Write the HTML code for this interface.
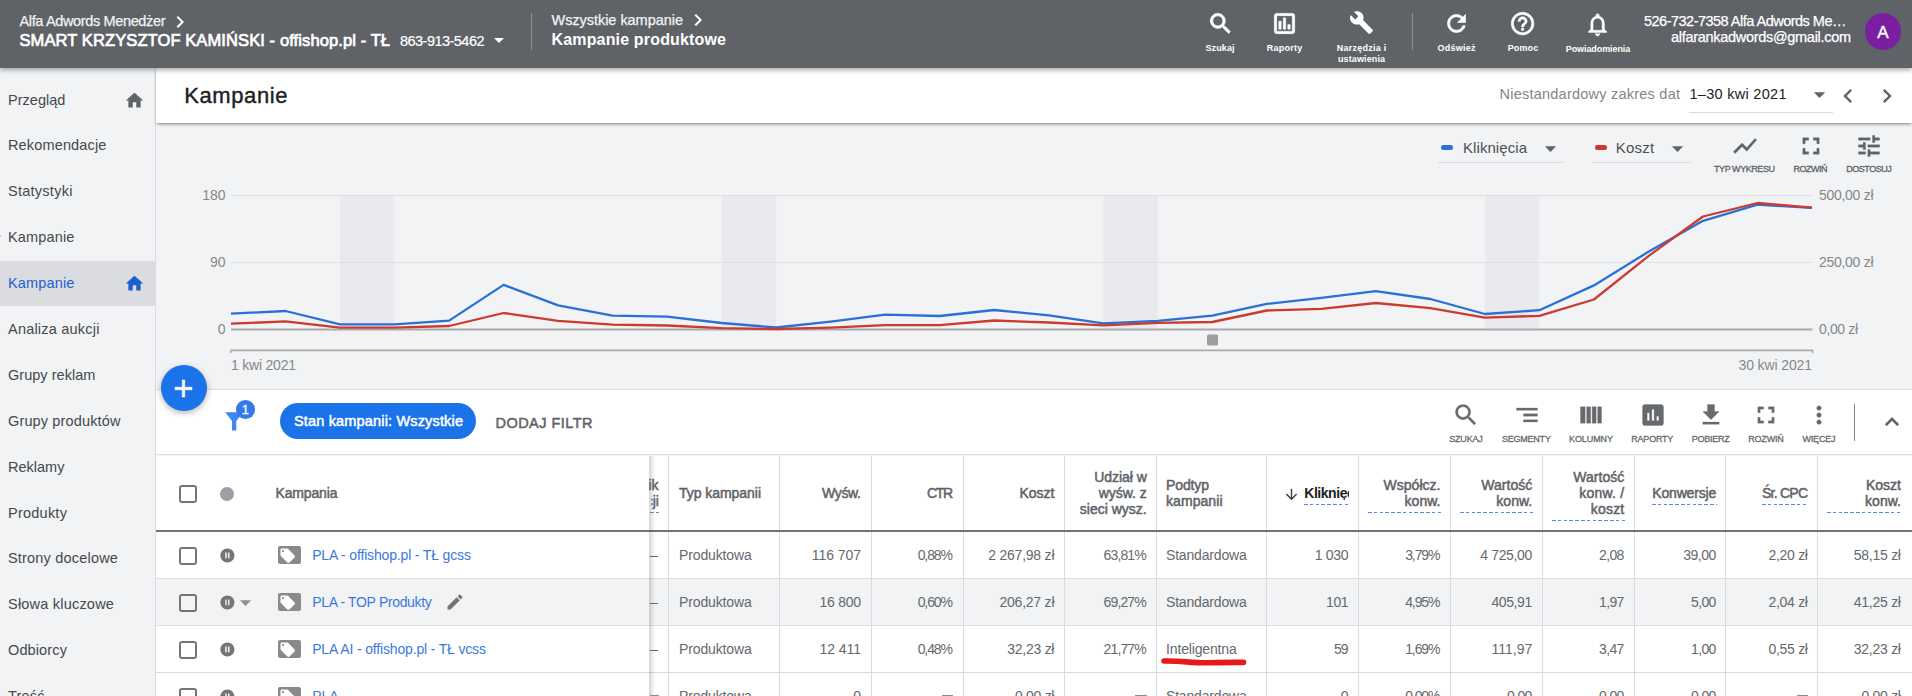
<!DOCTYPE html>
<html lang="pl"><head><meta charset="utf-8"><title>Kampanie</title><style>
html,body{margin:0;padding:0}
body{width:1912px;height:696px;overflow:hidden;position:relative;background:#f1f3f4;font-family:"Liberation Sans",sans-serif;}
.a{position:absolute;display:block}
.t{position:absolute;white-space:pre;line-height:1;display:block}
</style></head>
<body>
<div class="bg">
<div class="a" style="left:0px;top:68px;width:155px;height:628px;background:#f1f3f4;border-right:1px solid #dadce0"></div>
<div class="a" style="left:0px;top:261px;width:155px;height:45px;background:#dadce0"></div>
<div class="a" style="left:156px;top:68px;width:1756px;height:55px;background:#fff;box-shadow:0 2px 3px -1px rgba(0,0,0,.5)"></div>
<div class="a" style="left:0px;top:0px;width:1912px;height:68px;background:#5f6368;box-shadow:0 2px 5px rgba(0,0,0,.35)"></div>
</div>
<header>
<span class="t" style="left:19.50px;top:14.13px;font-size:14.5px;color:#f1f3f4;letter-spacing:-0.357px;-webkit-text-stroke:0.25px #f1f3f4;">Alfa Adwords Menedżer</span>
<svg class="a" style="left:168.00px;top:10.00px" width="24" height="24" viewBox="0 0 24 24"><path fill="#fff"  d="M10 6L8.59 7.41 13.17 12l-4.58 4.59L10 18l6-6z"/></svg>
<span class="t" style="left:19.50px;top:32.28px;font-size:16.5px;color:#fff;letter-spacing:0.103px;-webkit-text-stroke:0.7px #fff;">SMART KRZYSZTOF KAMIŃSKI - offishop.pl - TŁ</span>
<span class="t" style="left:400.00px;top:33.98px;font-size:14.5px;color:#fff;letter-spacing:-0.528px;-webkit-text-stroke:0.2px #fff;">863-913-5462</span>
<svg class="a" style="left:487.00px;top:28.30px" width="24" height="24" viewBox="0 0 24 24"><path fill="#fff"  d="M7 10l5 5 5-5z"/></svg>
<div class="a" style="left:530.5px;top:13px;width:1px;height:37px;background:rgba(255,255,255,.3)"></div>
<span class="t" style="left:551.50px;top:12.73px;font-size:14.5px;color:#f1f3f4;letter-spacing:-0.039px;-webkit-text-stroke:0.25px #f1f3f4;">Wszystkie kampanie</span>
<svg class="a" style="left:685.50px;top:8.00px" width="24" height="24" viewBox="0 0 24 24"><path fill="#fff"  d="M10 6L8.59 7.41 13.17 12l-4.58 4.59L10 18l6-6z"/></svg>
<span class="t" style="left:551.50px;top:31.96px;font-size:16px;color:#fff;font-weight:700;letter-spacing:0.162px;">Kampanie produktowe</span>
<svg class="a" style="left:1207.10px;top:9.60px" width="27.4" height="27.4" viewBox="0 0 24 24"><path fill="#fff"  stroke="#fff" stroke-width="0.7" stroke-linejoin="round" d="M15.5 14h-.79l-.28-.27C15.41 12.59 16 11.11 16 9.5 16 5.91 13.09 3 9.5 3S3 5.91 3 9.5 5.91 16 9.5 16c1.61 0 3.09-.59 4.23-1.57l.27.28v.79l5 4.99L20.49 19l-4.99-5zm-6 0C7.01 14 5 11.99 5 9.5S7.01 5 9.5 5 14 7.01 14 9.5 11.99 14 9.5 14z"/></svg>
<svg class="a" style="left:1271.10px;top:9.90px" width="27" height="27" viewBox="0 0 24 24"><path fill="#fff"  stroke="#fff" stroke-width="0.6" stroke-linejoin="round" d="M19 3H5c-1.1 0-2 .9-2 2v14c0 1.1.9 2 2 2h14c1.1 0 2-.9 2-2V5c0-1.1-.9-2-2-2zm0 16H5V5h14v14zM7 10h2v7H7zm4-3h2v10h-2zm4 6h2v4h-2z"/></svg>
<svg class="a" style="left:1349.20px;top:10.30px" width="25" height="25" viewBox="0 0 24 24"><path fill="#fff"  d="M22.7 19l-9.1-9.1c.9-2.3.4-5-1.5-6.9-2-2-5-2.4-7.4-1.3L9 6 6 9 1.6 4.7C.4 7.1.9 10.1 2.9 12.1c1.9 1.9 4.6 2.4 6.9 1.5l9.1 9.1c.4.4 1 .4 1.4 0l2.3-2.3c.5-.4.5-1.1.1-1.4z"/></svg>
<svg class="a" style="left:1443.00px;top:10.20px" width="27" height="27" viewBox="0 0 24 24"><path fill="#fff"  stroke="#fff" stroke-width="0.6" stroke-linejoin="round" d="M17.65 6.35C16.2 4.9 14.21 4 12 4c-4.42 0-7.99 3.58-7.99 8s3.57 8 7.99 8c3.73 0 6.84-2.55 7.73-6h-2.08c-.82 2.33-3.04 4-5.65 4-3.31 0-6-2.69-6-6s2.69-6 6-6c1.66 0 3.14.69 4.22 1.78L13 11h7V4l-2.35 2.35z"/></svg>
<svg class="a" style="left:1509.40px;top:9.90px" width="27.2" height="27.2" viewBox="0 0 24 24"><path fill="#fff"  stroke="#fff" stroke-width="0.5" stroke-linejoin="round" d="M11 18h2v-2h-2v2zm1-16C6.48 2 2 6.48 2 12s4.48 10 10 10 10-4.48 10-10S17.52 2 12 2zm0 18c-4.41 0-8-3.59-8-8s3.59-8 8-8 8 3.59 8 8-3.59 8-8 8zm0-14c-2.21 0-4 1.79-4 4h2c0-1.1.9-2 2-2s2 .9 2 2c0 2-3 1.75-3 5h2c0-2.25 3-2.5 3-5 0-2.21-1.79-4-4-4z"/></svg>
<svg class="a" style="left:1584.40px;top:11.00px" width="27.2" height="27.2" viewBox="0 0 24 24"><path fill="#fff"  stroke="#fff" stroke-width="0.4" stroke-linejoin="round" d="M12 22c1.1 0 2-.9 2-2h-4c0 1.1.9 2 2 2zm6-6v-5c0-3.07-1.63-5.64-4.5-6.32V4c0-.83-.67-1.5-1.5-1.5s-1.5.67-1.5 1.5v.68C7.64 5.36 6 7.92 6 11v5l-2 2v1h16v-1l-2-2zm-2 1H8v-6c0-2.48 1.51-4.5 4-4.5s4 2.02 4 4.5v6z"/></svg>
<span class="t" style="left:1205.50px;top:43.58px;font-size:9px;color:#fff;font-weight:700;letter-spacing:0.097px;">Szukaj</span>
<span class="t" style="left:1266.75px;top:43.58px;font-size:9px;color:#fff;font-weight:700;letter-spacing:0.247px;">Raporty</span>
<span class="t" style="left:1336.75px;top:43.58px;font-size:9px;color:#fff;font-weight:700;letter-spacing:0.247px;">Narzędzia i</span>
<span class="t" style="left:1338.00px;top:55.18px;font-size:9px;color:#fff;font-weight:700;letter-spacing:0.109px;">ustawienia</span>
<span class="t" style="left:1437.50px;top:43.58px;font-size:9px;color:#fff;font-weight:700;letter-spacing:0.247px;">Odśwież</span>
<span class="t" style="left:1507.75px;top:43.58px;font-size:9px;color:#fff;font-weight:700;letter-spacing:0.121px;">Pomoc</span>
<span class="t" style="left:1565.75px;top:44.58px;font-size:9px;color:#fff;font-weight:700;letter-spacing:-0.085px;">Powiadomienia</span>
<div class="a" style="left:1412px;top:13px;width:1px;height:37px;background:rgba(255,255,255,.3)"></div>
<span class="t" style="left:1644.00px;top:13.73px;font-size:14.5px;color:#fff;letter-spacing:-0.512px;-webkit-text-stroke:0.25px #fff;">526-732-7358 Alfa Adwords Me…</span>
<span class="t" style="left:1671.00px;top:29.73px;font-size:14.5px;color:#fff;letter-spacing:-0.299px;-webkit-text-stroke:0.25px #fff;">alfarankadwords@gmail.com</span>
<div class="a" style="left:1864.5px;top:12.8px;width:36.6px;height:36.8px;background:#7b1fa2;border-radius:50%"></div>
<span class="t" style="left:1877.13px;top:23.61px;font-size:17px;color:#fff;-webkit-text-stroke:0.4px #fff;">A</span>
</header>
<nav>
<span class="t" style="left:8.00px;top:92.53px;font-size:14.5px;color:#45494d;letter-spacing:0.024px;">Przegląd</span>
<span class="t" style="left:8.00px;top:138.42px;font-size:14.5px;color:#45494d;letter-spacing:0.151px;">Rekomendacje</span>
<span class="t" style="left:8.00px;top:184.31px;font-size:14.5px;color:#45494d;letter-spacing:0.261px;">Statystyki</span>
<span class="t" style="left:8.00px;top:230.20px;font-size:14.5px;color:#45494d;letter-spacing:0.158px;">Kampanie</span>
<span class="t" style="left:8.00px;top:276.09px;font-size:14.5px;color:#1c62cf;letter-spacing:0.158px;">Kampanie</span>
<span class="t" style="left:8.00px;top:321.98px;font-size:14.5px;color:#45494d;letter-spacing:0.210px;">Analiza aukcji</span>
<span class="t" style="left:8.00px;top:367.87px;font-size:14.5px;color:#45494d;letter-spacing:0.034px;">Grupy reklam</span>
<span class="t" style="left:8.00px;top:413.76px;font-size:14.5px;color:#45494d;letter-spacing:0.141px;">Grupy produktów</span>
<span class="t" style="left:8.00px;top:459.65px;font-size:14.5px;color:#45494d;">Reklamy</span>
<span class="t" style="left:8.00px;top:505.54px;font-size:14.5px;color:#45494d;letter-spacing:0.238px;">Produkty</span>
<span class="t" style="left:8.00px;top:551.43px;font-size:14.5px;color:#45494d;letter-spacing:0.193px;">Strony docelowe</span>
<span class="t" style="left:8.00px;top:597.32px;font-size:14.5px;color:#45494d;letter-spacing:0.210px;">Słowa kluczowe</span>
<span class="t" style="left:8.00px;top:643.21px;font-size:14.5px;color:#45494d;letter-spacing:0.124px;">Odbiorcy</span>
<span class="t" style="left:8.00px;top:689.10px;font-size:14.5px;color:#45494d;letter-spacing:0.170px;">Treść</span>
<div class="a" style="left:0px;top:235px;width:1px;height:2px;background:#c4c6c9"></div>
<svg class="a" style="left:123.50px;top:89.90px" width="21" height="21" viewBox="0 0 24 24"><path fill="#5f6368"  d="M10 20v-6h4v6h5v-8h3L12 3 2 12h3v8z"/></svg>
<svg class="a" style="left:123.60px;top:273.40px" width="21" height="21" viewBox="0 0 24 24"><path fill="#1a5fcc"  d="M10 20v-6h4v6h5v-8h3L12 3 2 12h3v8z"/></svg>
</nav>
<main>
<section class="titlebar">
<span class="t" style="left:184.20px;top:85.18px;font-size:22px;color:#202124;letter-spacing:0.603px;-webkit-text-stroke:0.4px #202124;">Kampanie</span>
<span class="t" style="left:1499.50px;top:87.23px;font-size:14.5px;color:#80868b;letter-spacing:0.233px;">Niestandardowy zakres dat</span>
<span class="t" style="left:1689.50px;top:87.23px;font-size:14.5px;color:#202124;letter-spacing:0.290px;">1–30 kwi 2021</span>
<div class="a" style="left:1689px;top:112px;width:144px;height:1px;background:#dadce0"></div>
<svg class="a" style="left:1806.20px;top:80.70px" width="27" height="27" viewBox="0 0 24 24"><path fill="#5f6368"  d="M7 10l5 5 5-5z"/></svg>
<svg class="a" style="left:1833.60px;top:81.80px" width="28" height="28" viewBox="0 0 24 24"><path fill="#5f6368"  d="M15.41 7.41L14 6l-6 6 6 6 1.41-1.41L10.83 12z"/></svg>
<svg class="a" style="left:1873.40px;top:81.80px" width="28" height="28" viewBox="0 0 24 24"><path fill="#5f6368"  d="M10 6L8.59 7.41 13.17 12l-4.58 4.59L10 18l6-6z"/></svg>
</section>
<section class="chart">
<span class="t" style="left:1463.00px;top:139.80px;font-size:15px;color:#4d5156;letter-spacing:0.069px;">Kliknięcia</span>
<span class="t" style="left:1615.75px;top:139.80px;font-size:15px;color:#4d5156;letter-spacing:0.246px;">Koszt</span>
<div class="a" style="left:1441.3px;top:145.3px;width:12px;height:4.3px;background:#2a70d6;border-radius:2.2px"></div>
<div class="a" style="left:1594.8px;top:145.3px;width:12px;height:4.3px;background:#cc3a30;border-radius:2.2px"></div>
<svg class="a" style="left:1536.50px;top:134.70px" width="27" height="27" viewBox="0 0 24 24"><path fill="#5f6368"  d="M7 10l5 5 5-5z"/></svg>
<svg class="a" style="left:1663.50px;top:134.70px" width="27" height="27" viewBox="0 0 24 24"><path fill="#5f6368"  d="M7 10l5 5 5-5z"/></svg>
<div class="a" style="left:1438px;top:162px;width:126px;height:1px;background:#dadce0"></div>
<div class="a" style="left:1592px;top:162px;width:99px;height:1px;background:#dadce0"></div>
<svg class="a" style="left:1730.50px;top:131.50px" width="28" height="28" viewBox="0 0 24 24"><path fill="#5f6368"  stroke="#5f6368" stroke-width="0.3" stroke-linejoin="round" d="M3.5 18.49l6-6.01 4 4L22 6.92l-1.41-1.41-7.09 7.97-4-4L2 16.99z"/></svg>
<svg class="a" style="left:1796.50px;top:131.70px" width="28" height="28" viewBox="0 0 24 24"><path fill="#5f6368"  stroke="#5f6368" stroke-width="0.3" stroke-linejoin="round" d="M7 14H5v5h5v-2H7v-3zm-2-4h2V7h3V5H5v5zm12 7h-3v2h5v-5h-2v3zM14 5v2h3v3h2V5h-5z"/></svg>
<svg class="a" style="left:1855.00px;top:132.20px" width="28" height="28" viewBox="0 0 24 24"><path fill="#5f6368"  stroke="#5f6368" stroke-width="0.3" stroke-linejoin="round" d="M3 17v2h6v-2H3zM3 5v2h10V5H3zm10 16v-2h8v-2h-8v-2h-2v6h2zM7 9v2H3v2h4v2h2V9H7zm14 4v-2H11v2h10zm-6-4h2V7h4V5h-4V3h-2v6z"/></svg>
<span class="t" style="left:1714.00px;top:165.08px;font-size:9px;color:#5f6368;letter-spacing:-0.436px;-webkit-text-stroke:0.3px #5f6368;">TYP WYKRESU</span>
<span class="t" style="left:1793.50px;top:165.08px;font-size:9px;color:#5f6368;letter-spacing:-0.500px;-webkit-text-stroke:0.3px #5f6368;">ROZWIŃ</span>
<span class="t" style="left:1846.25px;top:165.08px;font-size:9px;color:#5f6368;letter-spacing:-0.478px;-webkit-text-stroke:0.3px #5f6368;">DOSTOSUJ</span>
<svg class="a" style="left:0;top:0" width="1912" height="400" viewBox="0 0 1912 400"><rect x="340.0" y="195" width="54.5" height="134.5" fill="#e8eaed"/><rect x="721.7" y="195" width="54.5" height="134.5" fill="#e8eaed"/><rect x="1103.3" y="195" width="54.5" height="134.5" fill="#e8eaed"/><rect x="1484.9" y="195" width="54.5" height="134.5" fill="#e8eaed"/><path d="M231.0 195.5H1812.0M231.0 262.5H1812.0" stroke="#e0e0e0" stroke-width="1" fill="none"/><path d="M231.0 329.5H1812.6" stroke="#aaa" stroke-width="2.2" fill="none"/><path d="M231.0 353V350.4H1812.6V353" stroke="#aaa" stroke-width="1.6" fill="none" stroke-linejoin="round"/><rect x="1207" y="334.5" width="11" height="11" rx="1.5" fill="#9e9e9e"/><polyline points="231.0,313.7 285.5,311.0 340.0,324.3 394.6,324.3 449.1,320.6 503.6,284.9 558.1,305.3 612.6,315.7 667.1,316.6 721.7,323.0 776.2,327.5 830.7,321.7 885.2,314.7 939.7,316.0 994.2,310.0 1048.8,315.4 1103.3,323.3 1157.8,320.8 1212.3,315.7 1266.8,303.9 1321.3,297.8 1375.9,291.2 1430.4,299.0 1484.9,314.0 1539.4,310.2 1593.9,285.4 1648.4,251.8 1703.0,220.8 1757.5,204.7 1812.0,207.9" fill="none" stroke="#2a70d6" stroke-width="2.3" stroke-linejoin="round"/><polyline points="231.0,323.7 285.5,321.4 340.0,327.7 394.6,327.7 449.1,326.0 503.6,313.0 558.1,320.8 612.6,324.6 667.1,325.5 721.7,328.2 776.2,329.0 830.7,327.7 885.2,325.2 939.7,325.2 994.2,320.5 1048.8,322.5 1103.3,325.3 1157.8,322.9 1212.3,322.0 1266.8,310.5 1321.3,308.8 1375.9,303.0 1430.4,308.2 1484.9,317.7 1539.4,315.8 1593.9,299.5 1648.4,256.1 1703.0,216.5 1757.5,203.0 1812.0,207.6" fill="none" stroke="#cc3a30" stroke-width="2.3" stroke-linejoin="round"/></svg>
<span class="t" style="left:202.14px;top:188.15px;font-size:14px;color:#85888c;">180</span>
<span class="t" style="left:209.92px;top:255.15px;font-size:14px;color:#85888c;">90</span>
<span class="t" style="left:217.70px;top:322.15px;font-size:14px;color:#85888c;">0</span>
<span class="t" style="left:1819.00px;top:188.15px;font-size:14px;color:#85888c;letter-spacing:-0.291px;">500,00 zł</span>
<span class="t" style="left:1819.00px;top:255.15px;font-size:14px;color:#85888c;letter-spacing:-0.291px;">250,00 zł</span>
<span class="t" style="left:1819.00px;top:322.15px;font-size:14px;color:#85888c;letter-spacing:-0.375px;">0,00 zł</span>
<span class="t" style="left:231.00px;top:357.65px;font-size:14px;color:#85888c;letter-spacing:-0.215px;">1 kwi 2021</span>
<span class="t" style="left:1738.50px;top:357.65px;font-size:14px;color:#85888c;letter-spacing:-0.122px;">30 kwi 2021</span>
</section>
<section class="toolbar">
<div class="a" style="left:156px;top:389px;width:1756px;height:1px;background:#dadce0"></div>
<div class="a" style="left:156px;top:390px;width:1756px;height:65px;background:#fff"></div>
<div class="a" style="left:156px;top:454.4px;width:1756px;height:1px;background:#dadce0"></div>
<div class="a" style="left:160.7px;top:365px;width:46px;height:46px;background:#1a73e8;border-radius:50%;box-shadow:0 2px 6px rgba(0,0,0,.3)"></div>
<svg class="a" style="left:169.30px;top:373.50px" width="29" height="29" viewBox="0 0 24 24"><path fill="#fff"  stroke="#fff" stroke-width="0.6" stroke-linejoin="round" d="M19 13h-6v6h-2v-6H5v-2h6V5h2v6h6v2z"/></svg>
<svg class="a" style="left:220px;top:405px" width="30" height="30" viewBox="220 405 30 30"><path fill="#4285f4" d="M225.2 412.2H243.2L236.3 420.9V430.4H232V420.9Z"/></svg>
<div class="a" style="left:236.2px;top:400.4px;width:18.6px;height:18.6px;background:#357ae8;border-radius:50%;border:0"></div>
<span class="t" style="left:241.68px;top:402.80px;font-size:13px;color:#fff;-webkit-text-stroke:0.3px #fff;">1</span>
<div class="a" style="left:280px;top:403px;width:196px;height:36.4px;background:#1a73e8;border-radius:18.2px"></div>
<span class="t" style="left:294.00px;top:413.73px;font-size:14.5px;color:#fff;letter-spacing:0.165px;-webkit-text-stroke:0.5px #fff;">Stan kampanii: Wszystkie</span>
<span class="t" style="left:495.50px;top:415.73px;font-size:14.5px;color:#5f6368;letter-spacing:0.463px;-webkit-text-stroke:0.5px #5f6368;">DODAJ FILTR</span>
<svg class="a" style="left:1452.20px;top:400.50px" width="28" height="28" viewBox="0 0 24 24"><path fill="#666a6e"  stroke="#666a6e" stroke-width="0.25" stroke-linejoin="round" d="M15.5 14h-.79l-.28-.27C15.41 12.59 16 11.11 16 9.5 16 5.91 13.09 3 9.5 3S3 5.91 3 9.5 5.91 16 9.5 16c1.61 0 3.09-.59 4.23-1.57l.27.28v.79l5 4.99L20.49 19l-4.99-5zm-6 0C7.01 14 5 11.99 5 9.5S7.01 5 9.5 5 14 7.01 14 9.5 11.99 14 9.5 14z"/></svg>
<span class="t" style="left:1449.25px;top:434.98px;font-size:9px;color:#666a6e;letter-spacing:-0.203px;-webkit-text-stroke:0.3px #666a6e;">SZUKAJ</span>
<svg class="a" style="left:1512.60px;top:400.50px" width="28" height="28" viewBox="0 0 24 24"><path fill="#666a6e"  stroke="#666a6e" stroke-width="0.25" stroke-linejoin="round" d="M9 18h12v-2H9v2zM3 6v2h18V6H3zm6 7h12v-2H9v2z"/></svg>
<span class="t" style="left:1501.90px;top:434.98px;font-size:9px;color:#666a6e;letter-spacing:-0.217px;-webkit-text-stroke:0.3px #666a6e;">SEGMENTY</span>
<svg class="a" style="left:1577.20px;top:400.50px" width="28" height="28" viewBox="0 0 24 24"><path fill="#666a6e"  stroke="#666a6e" stroke-width="0.25" stroke-linejoin="round" d="M3 5h4v14H3zM8.3 5h3.4v14H8.3zM13 5h3.4v14H13zM17.7 5H21v14h-3.3z"/></svg>
<span class="t" style="left:1569.00px;top:434.98px;font-size:9px;color:#666a6e;letter-spacing:-0.086px;-webkit-text-stroke:0.3px #666a6e;">KOLUMNY</span>
<svg class="a" style="left:1638.50px;top:400.50px" width="28" height="28" viewBox="0 0 24 24"><path fill="#666a6e"  stroke="#666a6e" stroke-width="0.25" stroke-linejoin="round" d="M19 3H5c-1.1 0-2 .9-2 2v14c0 1.1.9 2 2 2h14c1.1 0 2-.9 2-2V5c0-1.1-.9-2-2-2zM9 17H7v-7h2v7zm4 0h-2V7h2v10zm4 0h-2v-4h2v4z"/></svg>
<span class="t" style="left:1631.30px;top:434.98px;font-size:9px;color:#666a6e;letter-spacing:-0.224px;-webkit-text-stroke:0.3px #666a6e;">RAPORTY</span>
<svg class="a" style="left:1696.90px;top:400.50px" width="28" height="28" viewBox="0 0 24 24"><path fill="#666a6e"  stroke="#666a6e" stroke-width="0.25" stroke-linejoin="round" d="M19 9h-4V3H9v6H5l7 7 7-7zM5 18v2h14v-2H5z"/></svg>
<span class="t" style="left:1691.70px;top:434.98px;font-size:9px;color:#666a6e;letter-spacing:-0.253px;-webkit-text-stroke:0.3px #666a6e;">POBIERZ</span>
<svg class="a" style="left:1752.20px;top:400.50px" width="28" height="28" viewBox="0 0 24 24"><path fill="#666a6e"  stroke="#666a6e" stroke-width="0.25" stroke-linejoin="round" d="M7 14H5v5h5v-2H7v-3zm-2-4h2V7h3V5H5v5zm12 7h-3v2h5v-5h-2v3zM14 5v2h3v3h2V5h-5z"/></svg>
<span class="t" style="left:1748.25px;top:434.98px;font-size:9px;color:#666a6e;letter-spacing:-0.200px;-webkit-text-stroke:0.3px #666a6e;">ROZWIŃ</span>
<svg class="a" style="left:1805.20px;top:400.50px" width="28" height="28" viewBox="0 0 24 24"><path fill="#666a6e"  stroke="#666a6e" stroke-width="0.25" stroke-linejoin="round" d="M12 8c1.1 0 2-.9 2-2s-.9-2-2-2-2 .9-2 2 .9 2 2 2zm0 2c-1.1 0-2 .9-2 2s.9 2 2 2 2-.9 2-2-.9-2-2-2zm0 6c-1.1 0-2 .9-2 2s.9 2 2 2 2-.9 2-2-.9-2-2-2z"/></svg>
<span class="t" style="left:1802.50px;top:434.98px;font-size:9px;color:#666a6e;letter-spacing:-0.203px;-webkit-text-stroke:0.3px #666a6e;">WIĘCEJ</span>
<div class="a" style="left:1854px;top:404px;width:1px;height:36.5px;background:#80868b"></div>
<svg class="a" style="left:1878.00px;top:408.30px" width="28" height="28" viewBox="0 0 24 24"><path fill="#5f6368"  stroke="#5f6368" stroke-width="0.25" stroke-linejoin="round" d="M12 8l-6 6 1.41 1.41L12 10.83l4.59 4.58L18 14z"/></svg>
</section>
<section class="table">
<div class="a" style="left:156px;top:456px;width:1756px;height:75px;background:#fff"></div>
<div class="a" style="left:156px;top:532px;width:1756px;height:164px;background:#fff"></div>
<div class="a" style="left:156px;top:578.6px;width:1756px;height:46.6px;background:#f1f3f4"></div>
<div class="a" style="left:156px;top:577.8px;width:1756px;height:1px;background:#dadce0"></div>
<div class="a" style="left:156px;top:625.0px;width:1756px;height:1px;background:#dadce0"></div>
<div class="a" style="left:156px;top:672.4px;width:1756px;height:1px;background:#dadce0"></div>
<div class="a" style="left:668.2px;top:456px;width:1px;height:240px;background:#dadce0"></div>
<div class="a" style="left:778.6px;top:456px;width:1px;height:240px;background:#dadce0"></div>
<div class="a" style="left:870.8px;top:456px;width:1px;height:240px;background:#dadce0"></div>
<div class="a" style="left:962.8px;top:456px;width:1px;height:240px;background:#dadce0"></div>
<div class="a" style="left:1063.8px;top:456px;width:1px;height:240px;background:#dadce0"></div>
<div class="a" style="left:1156px;top:456px;width:1px;height:240px;background:#dadce0"></div>
<div class="a" style="left:1266.3px;top:456px;width:1px;height:240px;background:#dadce0"></div>
<div class="a" style="left:1357.9px;top:456px;width:1px;height:240px;background:#dadce0"></div>
<div class="a" style="left:1450px;top:456px;width:1px;height:240px;background:#dadce0"></div>
<div class="a" style="left:1541.8px;top:456px;width:1px;height:240px;background:#dadce0"></div>
<div class="a" style="left:1633.6px;top:456px;width:1px;height:240px;background:#dadce0"></div>
<div class="a" style="left:1725.4px;top:456px;width:1px;height:240px;background:#dadce0"></div>
<div class="a" style="left:1817.4px;top:456px;width:1px;height:240px;background:#dadce0"></div>
<div class="a" style="left:156px;top:530.1px;width:1756px;height:2px;background:#70757a"></div>
<div class="a" style="left:648.8px;top:456px;width:7px;height:240px;background:linear-gradient(90deg,rgba(60,64,67,.22),rgba(60,64,67,.15) 30%,rgba(60,64,67,.05) 65%,rgba(60,64,67,0))"></div>
<div class="a" style="left:179px;top:484.8px;width:14px;height:14px;border:2px solid #757575;border-radius:3px;background:transparent"></div>
<div class="a" style="left:220px;top:486.5px;width:14px;height:14px;background:#9aa0a6;border-radius:50%"></div>
<span class="t" style="left:275.50px;top:486.15px;font-size:14px;color:#5f6368;letter-spacing:-0.150px;-webkit-text-stroke:0.5px #5f6368;">Kampania</span>
<span class="t" style="left:648.50px;top:478.15px;font-size:14px;color:#5f6368;-webkit-text-stroke:0.5px #5f6368;">ik</span>
<span class="t" style="left:645.67px;top:494.15px;font-size:14px;color:#5f6368;clip-path:inset(-2px 0 -4px 5.6px);-webkit-text-stroke:0.5px #5f6368;">cji</span>
<span class="t" style="left:679.00px;top:486.15px;font-size:14px;color:#5f6368;letter-spacing:-0.044px;-webkit-text-stroke:0.5px #5f6368;">Typ kampanii</span>
<span class="t" style="left:822.00px;top:486.35px;font-size:14px;color:#5f6368;letter-spacing:-0.332px;-webkit-text-stroke:0.5px #5f6368;">Wyśw.</span>
<span class="t" style="left:927.00px;top:486.35px;font-size:14px;color:#5f6368;letter-spacing:-1.391px;-webkit-text-stroke:0.5px #5f6368;">CTR</span>
<span class="t" style="left:1019.50px;top:486.35px;font-size:14px;color:#5f6368;-webkit-text-stroke:0.5px #5f6368;">Koszt</span>
<span class="t" style="left:1094.25px;top:470.35px;font-size:14px;color:#5f6368;letter-spacing:-0.058px;-webkit-text-stroke:0.5px #5f6368;">Udział w</span>
<span class="t" style="left:1098.75px;top:486.35px;font-size:14px;color:#5f6368;letter-spacing:-0.039px;-webkit-text-stroke:0.5px #5f6368;">wyśw. z</span>
<span class="t" style="left:1079.75px;top:502.35px;font-size:14px;color:#5f6368;letter-spacing:0.009px;-webkit-text-stroke:0.5px #5f6368;">sieci wysz.</span>
<span class="t" style="left:1166.00px;top:478.35px;font-size:14px;color:#5f6368;letter-spacing:-0.119px;-webkit-text-stroke:0.5px #5f6368;">Podtyp</span>
<span class="t" style="left:1166.00px;top:494.35px;font-size:14px;color:#5f6368;letter-spacing:0.067px;-webkit-text-stroke:0.5px #5f6368;">kampanii</span>
<svg class="a" style="left:1282.50px;top:486.00px" width="17" height="17" viewBox="0 0 24 24"><path fill="#3c4043"  d="M20 12l-1.41-1.41L13 16.17V4h-2v12.17l-5.58-5.59L4 12l8 8 8-8z"/></svg>
<span class="t" style="left:1304.25px;top:486.35px;font-size:14px;color:#202124;font-weight:700;letter-spacing:-0.453px;width:44.8px;overflow:hidden;">Kliknięcia</span>
<span class="t" style="left:1383.50px;top:478.35px;font-size:14px;color:#5f6368;letter-spacing:0.029px;-webkit-text-stroke:0.5px #5f6368;">Współcz.</span>
<span class="t" style="left:1404.50px;top:494.35px;font-size:14px;color:#5f6368;letter-spacing:0.047px;-webkit-text-stroke:0.5px #5f6368;">konw.</span>
<span class="t" style="left:1481.25px;top:478.35px;font-size:14px;color:#5f6368;letter-spacing:0.029px;-webkit-text-stroke:0.5px #5f6368;">Wartość</span>
<span class="t" style="left:1496.25px;top:494.35px;font-size:14px;color:#5f6368;letter-spacing:0.047px;-webkit-text-stroke:0.5px #5f6368;">konw.</span>
<span class="t" style="left:1573.25px;top:470.35px;font-size:14px;color:#5f6368;letter-spacing:0.029px;-webkit-text-stroke:0.5px #5f6368;">Wartość</span>
<span class="t" style="left:1579.25px;top:486.35px;font-size:14px;color:#5f6368;letter-spacing:0.234px;-webkit-text-stroke:0.5px #5f6368;">konw. /</span>
<span class="t" style="left:1590.75px;top:502.35px;font-size:14px;color:#5f6368;letter-spacing:0.203px;-webkit-text-stroke:0.5px #5f6368;">koszt</span>
<span class="t" style="left:1652.25px;top:486.35px;font-size:14px;color:#5f6368;letter-spacing:-0.172px;-webkit-text-stroke:0.5px #5f6368;">Konwersje</span>
<span class="t" style="left:1762.00px;top:486.35px;font-size:14px;color:#5f6368;letter-spacing:-0.763px;-webkit-text-stroke:0.5px #5f6368;">Śr. CPC</span>
<span class="t" style="left:1866.00px;top:478.35px;font-size:14px;color:#5f6368;-webkit-text-stroke:0.5px #5f6368;">Koszt</span>
<span class="t" style="left:1865.00px;top:494.35px;font-size:14px;color:#5f6368;letter-spacing:0.047px;-webkit-text-stroke:0.5px #5f6368;">konw.</span>
<div class="a" style="left:650px;top:512px;width:9px;height:1px;background:repeating-linear-gradient(90deg,#5a8ae0 0 3.6px,transparent 3.6px 5.8px)"></div>
<div class="a" style="left:1304px;top:504px;width:45px;height:1px;background:repeating-linear-gradient(90deg,#5a8ae0 0 3.6px,transparent 3.6px 5.8px)"></div>
<div class="a" style="left:1368px;top:512px;width:72.5px;height:1px;background:repeating-linear-gradient(90deg,#5a8ae0 0 3.6px,transparent 3.6px 5.8px)"></div>
<div class="a" style="left:1460px;top:512px;width:72.5px;height:1px;background:repeating-linear-gradient(90deg,#5a8ae0 0 3.6px,transparent 3.6px 5.8px)"></div>
<div class="a" style="left:1552px;top:520px;width:72.5px;height:1px;background:repeating-linear-gradient(90deg,#5a8ae0 0 3.6px,transparent 3.6px 5.8px)"></div>
<div class="a" style="left:1651.5px;top:504px;width:65.0px;height:1px;background:repeating-linear-gradient(90deg,#5a8ae0 0 3.6px,transparent 3.6px 5.8px)"></div>
<div class="a" style="left:1762px;top:504px;width:46px;height:1px;background:repeating-linear-gradient(90deg,#5a8ae0 0 3.6px,transparent 3.6px 5.8px)"></div>
<div class="a" style="left:1827px;top:512px;width:74px;height:1px;background:repeating-linear-gradient(90deg,#5a8ae0 0 3.6px,transparent 3.6px 5.8px)"></div>
<div class="a" style="left:179px;top:546.5999999999999px;width:14px;height:14px;border:2px solid #757575;border-radius:3px;background:transparent"></div>
<svg class="a" style="left:218.60px;top:547.00px" width="16.8" height="16.8" viewBox="0 0 24 24"><path fill="#757575"  d="M12 2C6.48 2 2 6.48 2 12s4.48 10 10 10 10-4.48 10-10S17.52 2 12 2zm-1 14H9V8h2v8zm4 0h-2V8h2v8z"/></svg>
<div class="a" style="left:278px;top:546.4px;width:22.8px;height:18px;background:#8a8a8a;border-radius:2px"></div>
<svg class="a" style="left:278.50px;top:546.90px" width="17.4" height="17.4" viewBox="0 0 24 24"><path fill="#fff"  d="M21.41 11.58l-9-9C12.05 2.22 11.55 2 11 2H4c-1.1 0-2 .9-2 2v7c0 .55.22 1.05.59 1.42l9 9c.36.36.86.58 1.41.58.55 0 1.05-.22 1.41-.59l7-7c.37-.36.59-.86.59-1.41 0-.55-.23-1.06-.59-1.42zM5.5 7C4.67 7 4 6.33 4 5.5S4.67 4 5.5 4 7 4.67 7 5.5 6.33 7 5.5 7z"/></svg>
<span class="t" style="left:312.20px;top:548.45px;font-size:14px;color:#3b78de;letter-spacing:-0.162px;">PLA - offishop.pl - TŁ gcss</span>
<span class="t" style="left:650.00px;top:548.45px;font-size:14px;color:#65696d;-webkit-text-stroke:0.2px #65696d;">–</span>
<span class="t" style="left:679.00px;top:548.45px;font-size:14px;color:#65696d;letter-spacing:-0.132px;">Produktowa</span>
<span class="t" style="left:1166.00px;top:548.45px;font-size:14px;color:#65696d;letter-spacing:-0.177px;">Standardowa</span>
<span class="t" style="left:811.73px;top:548.45px;font-size:14px;color:#65696d;letter-spacing:-0.051px;">116 707</span>
<span class="t" style="left:917.68px;top:548.45px;font-size:14px;color:#65696d;letter-spacing:-1.095px;">0,88%</span>
<span class="t" style="left:988.21px;top:548.45px;font-size:14px;color:#65696d;letter-spacing:-0.221px;">2 267,98 zł</span>
<span class="t" style="left:1103.62px;top:548.45px;font-size:14px;color:#65696d;letter-spacing:-0.871px;">63,81%</span>
<span class="t" style="left:1314.84px;top:548.45px;font-size:14px;color:#65696d;letter-spacing:-0.346px;">1 030</span>
<span class="t" style="left:1405.18px;top:548.45px;font-size:14px;color:#65696d;letter-spacing:-1.095px;">3,79%</span>
<span class="t" style="left:1480.25px;top:548.45px;font-size:14px;color:#65696d;letter-spacing:-0.357px;">4 725,00</span>
<span class="t" style="left:1599.11px;top:548.45px;font-size:14px;color:#65696d;letter-spacing:-0.702px;">2,08</span>
<span class="t" style="left:1683.30px;top:548.45px;font-size:14px;color:#65696d;letter-spacing:-0.525px;">39,00</span>
<span class="t" style="left:1768.56px;top:548.45px;font-size:14px;color:#65696d;letter-spacing:-0.302px;">2,20 zł</span>
<span class="t" style="left:1853.76px;top:548.45px;font-size:14px;color:#65696d;letter-spacing:-0.258px;">58,15 zł</span>
<div class="a" style="left:179px;top:593.5999999999999px;width:14px;height:14px;border:2px solid #757575;border-radius:3px;background:transparent"></div>
<svg class="a" style="left:218.60px;top:594.00px" width="16.8" height="16.8" viewBox="0 0 24 24"><path fill="#757575"  d="M12 2C6.48 2 2 6.48 2 12s4.48 10 10 10 10-4.48 10-10S17.52 2 12 2zm-1 14H9V8h2v8zm4 0h-2V8h2v8z"/></svg>
<div class="a" style="left:278px;top:593.4px;width:22.8px;height:18px;background:#8a8a8a;border-radius:2px"></div>
<svg class="a" style="left:278.50px;top:593.90px" width="17.4" height="17.4" viewBox="0 0 24 24"><path fill="#fff"  d="M21.41 11.58l-9-9C12.05 2.22 11.55 2 11 2H4c-1.1 0-2 .9-2 2v7c0 .55.22 1.05.59 1.42l9 9c.36.36.86.58 1.41.58.55 0 1.05-.22 1.41-.59l7-7c.37-.36.59-.86.59-1.41 0-.55-.23-1.06-.59-1.42zM5.5 7C4.67 7 4 6.33 4 5.5S4.67 4 5.5 4 7 4.67 7 5.5 6.33 7 5.5 7z"/></svg>
<span class="t" style="left:312.20px;top:595.45px;font-size:14px;color:#3b78de;letter-spacing:-0.335px;">PLA - TOP Produkty</span>
<span class="t" style="left:650.00px;top:595.45px;font-size:14px;color:#65696d;-webkit-text-stroke:0.2px #65696d;">–</span>
<span class="t" style="left:679.00px;top:595.45px;font-size:14px;color:#65696d;letter-spacing:-0.132px;">Produktowa</span>
<span class="t" style="left:1166.00px;top:595.45px;font-size:14px;color:#65696d;letter-spacing:-0.177px;">Standardowa</span>
<span class="t" style="left:819.53px;top:595.45px;font-size:14px;color:#65696d;letter-spacing:-0.272px;">16 800</span>
<span class="t" style="left:917.68px;top:595.45px;font-size:14px;color:#65696d;letter-spacing:-1.095px;">0,60%</span>
<span class="t" style="left:999.46px;top:595.45px;font-size:14px;color:#65696d;letter-spacing:-0.223px;">206,27 zł</span>
<span class="t" style="left:1103.62px;top:595.45px;font-size:14px;color:#65696d;letter-spacing:-0.871px;">69,27%</span>
<span class="t" style="left:1326.09px;top:595.45px;font-size:14px;color:#65696d;letter-spacing:-0.472px;">101</span>
<span class="t" style="left:1405.18px;top:595.45px;font-size:14px;color:#65696d;letter-spacing:-1.095px;">4,95%</span>
<span class="t" style="left:1491.50px;top:595.45px;font-size:14px;color:#65696d;letter-spacing:-0.415px;">405,91</span>
<span class="t" style="left:1599.11px;top:595.45px;font-size:14px;color:#65696d;letter-spacing:-0.702px;">1,97</span>
<span class="t" style="left:1691.11px;top:595.45px;font-size:14px;color:#65696d;letter-spacing:-0.702px;">5,00</span>
<span class="t" style="left:1768.56px;top:595.45px;font-size:14px;color:#65696d;letter-spacing:-0.302px;">2,04 zł</span>
<span class="t" style="left:1853.76px;top:595.45px;font-size:14px;color:#65696d;letter-spacing:-0.258px;">41,25 zł</span>
<div class="a" style="left:179px;top:640.5999999999999px;width:14px;height:14px;border:2px solid #757575;border-radius:3px;background:transparent"></div>
<svg class="a" style="left:218.60px;top:641.00px" width="16.8" height="16.8" viewBox="0 0 24 24"><path fill="#757575"  d="M12 2C6.48 2 2 6.48 2 12s4.48 10 10 10 10-4.48 10-10S17.52 2 12 2zm-1 14H9V8h2v8zm4 0h-2V8h2v8z"/></svg>
<div class="a" style="left:278px;top:640.4px;width:22.8px;height:18px;background:#8a8a8a;border-radius:2px"></div>
<svg class="a" style="left:278.50px;top:640.90px" width="17.4" height="17.4" viewBox="0 0 24 24"><path fill="#fff"  d="M21.41 11.58l-9-9C12.05 2.22 11.55 2 11 2H4c-1.1 0-2 .9-2 2v7c0 .55.22 1.05.59 1.42l9 9c.36.36.86.58 1.41.58.55 0 1.05-.22 1.41-.59l7-7c.37-.36.59-.86.59-1.41 0-.55-.23-1.06-.59-1.42zM5.5 7C4.67 7 4 6.33 4 5.5S4.67 4 5.5 4 7 4.67 7 5.5 6.33 7 5.5 7z"/></svg>
<span class="t" style="left:312.20px;top:642.45px;font-size:14px;color:#3b78de;letter-spacing:-0.164px;">PLA AI - offishop.pl - TŁ vcss</span>
<span class="t" style="left:650.00px;top:642.45px;font-size:14px;color:#65696d;-webkit-text-stroke:0.2px #65696d;">–</span>
<span class="t" style="left:679.00px;top:642.45px;font-size:14px;color:#65696d;letter-spacing:-0.132px;">Produktowa</span>
<span class="t" style="left:1166.00px;top:642.45px;font-size:14px;color:#65696d;letter-spacing:-0.146px;">Inteligentna</span>
<span class="t" style="left:819.53px;top:642.45px;font-size:14px;color:#65696d;letter-spacing:-0.063px;">12 411</span>
<span class="t" style="left:917.68px;top:642.45px;font-size:14px;color:#65696d;letter-spacing:-1.095px;">0,48%</span>
<span class="t" style="left:1007.26px;top:642.45px;font-size:14px;color:#65696d;letter-spacing:-0.258px;">32,23 zł</span>
<span class="t" style="left:1103.62px;top:642.45px;font-size:14px;color:#65696d;letter-spacing:-0.871px;">21,77%</span>
<span class="t" style="left:1333.89px;top:642.45px;font-size:14px;color:#65696d;letter-spacing:-0.968px;">59</span>
<span class="t" style="left:1405.18px;top:642.45px;font-size:14px;color:#65696d;letter-spacing:-1.095px;">1,69%</span>
<span class="t" style="left:1491.50px;top:642.45px;font-size:14px;color:#65696d;">111,97</span>
<span class="t" style="left:1599.11px;top:642.45px;font-size:14px;color:#65696d;letter-spacing:-0.702px;">3,47</span>
<span class="t" style="left:1691.11px;top:642.45px;font-size:14px;color:#65696d;letter-spacing:-0.702px;">1,00</span>
<span class="t" style="left:1768.56px;top:642.45px;font-size:14px;color:#65696d;letter-spacing:-0.302px;">0,55 zł</span>
<span class="t" style="left:1853.76px;top:642.45px;font-size:14px;color:#65696d;letter-spacing:-0.258px;">32,23 zł</span>
<div class="a" style="left:179px;top:687.5999999999999px;width:14px;height:14px;border:2px solid #757575;border-radius:3px;background:transparent"></div>
<svg class="a" style="left:218.60px;top:688.00px" width="16.8" height="16.8" viewBox="0 0 24 24"><path fill="#757575"  d="M12 2C6.48 2 2 6.48 2 12s4.48 10 10 10 10-4.48 10-10S17.52 2 12 2zm-1 14H9V8h2v8zm4 0h-2V8h2v8z"/></svg>
<div class="a" style="left:278px;top:687.4px;width:22.8px;height:18px;background:#8a8a8a;border-radius:2px"></div>
<svg class="a" style="left:278.50px;top:687.90px" width="17.4" height="17.4" viewBox="0 0 24 24"><path fill="#fff"  d="M21.41 11.58l-9-9C12.05 2.22 11.55 2 11 2H4c-1.1 0-2 .9-2 2v7c0 .55.22 1.05.59 1.42l9 9c.36.36.86.58 1.41.58.55 0 1.05-.22 1.41-.59l7-7c.37-.36.59-.86.59-1.41 0-.55-.23-1.06-.59-1.42zM5.5 7C4.67 7 4 6.33 4 5.5S4.67 4 5.5 4 7 4.67 7 5.5 6.33 7 5.5 7z"/></svg>
<span class="t" style="left:312.20px;top:689.45px;font-size:14px;color:#3b78de;">PLA</span>
<span class="t" style="left:650.00px;top:689.45px;font-size:14px;color:#65696d;-webkit-text-stroke:0.2px #65696d;">–</span>
<span class="t" style="left:679.00px;top:689.45px;font-size:14px;color:#65696d;letter-spacing:-0.132px;">Produktowa</span>
<span class="t" style="left:1166.00px;top:689.45px;font-size:14px;color:#65696d;letter-spacing:-0.177px;">Standardowa</span>
<span class="t" style="left:853.20px;top:689.45px;font-size:14px;color:#65696d;">0</span>
<span class="t" style="left:939.00px;top:689.45px;font-size:14px;color:#65696d;">—</span>
<span class="t" style="left:1015.06px;top:689.45px;font-size:14px;color:#65696d;letter-spacing:-0.302px;">0,00 zł</span>
<span class="t" style="left:1132.75px;top:689.45px;font-size:14px;color:#65696d;">—</span>
<span class="t" style="left:1340.70px;top:689.45px;font-size:14px;color:#65696d;">0</span>
<span class="t" style="left:1405.18px;top:689.45px;font-size:14px;color:#65696d;letter-spacing:-1.095px;">0,00%</span>
<span class="t" style="left:1507.11px;top:689.45px;font-size:14px;color:#65696d;letter-spacing:-0.702px;">0,00</span>
<span class="t" style="left:1599.11px;top:689.45px;font-size:14px;color:#65696d;letter-spacing:-0.702px;">0,00</span>
<span class="t" style="left:1691.11px;top:689.45px;font-size:14px;color:#65696d;letter-spacing:-0.702px;">0,00</span>
<span class="t" style="left:1794.00px;top:689.45px;font-size:14px;color:#65696d;">—</span>
<span class="t" style="left:1861.56px;top:689.45px;font-size:14px;color:#65696d;letter-spacing:-0.302px;">0,00 zł</span>
<svg class="a" style="left:232.00px;top:589.10px" width="27" height="27" viewBox="0 0 24 24"><path fill="#909090"  d="M7 10l5 5 5-5z"/></svg>
<svg class="a" style="left:444.50px;top:592.00px" width="20" height="20" viewBox="0 0 24 24"><path fill="#757575"  d="M3 17.25V21h3.75L17.81 9.94l-3.75-3.75L3 17.25zM20.71 7.04c.39-.39.39-1.02 0-1.41l-2.34-2.34c-.39-.39-1.02-.39-1.41 0l-1.83 1.83 3.75 3.75 1.83-1.83z"/></svg>
<svg class="a" style="left:1150px;top:650px" width="110" height="24" viewBox="1150 650 110 24"><path d="M1164 661C1178 660.4 1192 663 1206 662.8 1220 662.5 1234 662.2 1243.5 662.4" stroke="#e8191a" stroke-width="5.6" stroke-linecap="round" fill="none"/></svg>
<div class="a" style="left:650px;top:695px;width:8.5px;height:1px;background:#8a8d91"></div>
<div class="a" style="left:941.5px;top:695px;width:11.5px;height:1px;background:#8a8d91"></div>
<div class="a" style="left:1135.3px;top:695px;width:11.450000000000045px;height:1px;background:#8a8d91"></div>
<div class="a" style="left:1796.5px;top:695px;width:11.5px;height:1px;background:#8a8d91"></div>
</section>
</main>
</body></html>
